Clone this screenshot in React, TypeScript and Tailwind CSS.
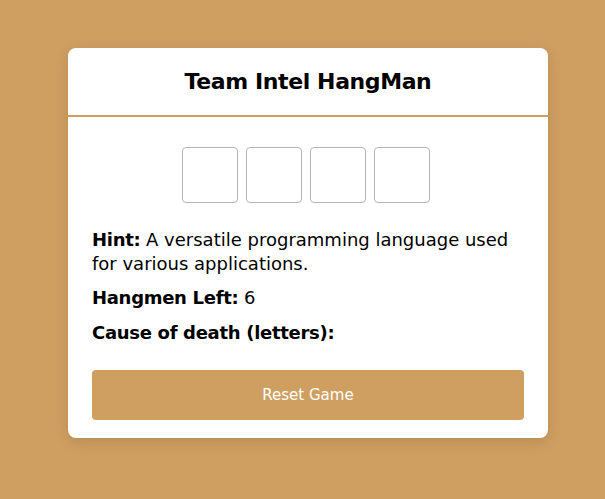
export default function App() {
  const slots = ['', '', '', '']

  return (
    <div className="min-h-screen w-full bg-[#cf9f61] pt-[48px] pl-[68px] font-['DejaVu_Sans',sans-serif]">
      <div className="w-[480px] rounded-lg bg-white shadow-[0_4px_14px_rgba(0,0,0,0.12)]">
        <div className="flex h-[69px] items-center justify-center border-b-2 border-[#cf9f61]">
          <h1 className="text-[22px] font-bold tracking-[-0.4px] text-black">Team Intel HangMan</h1>
        </div>
        <div className="px-6 pt-[30px] pb-[18px]">
          <div className="flex justify-center gap-2 pr-1">
            {slots.map((s, i) => (
              <div
                key={i}
                className="flex h-[56px] w-[56px] items-center justify-center rounded border border-[#b5b5b5] text-xl"
              >
                {s}
              </div>
            ))}
          </div>
          <div className="mt-[25px] text-[18px] leading-6 text-black">
            <p>
              <span className="font-bold tracking-[-0.3px]">Hint:</span> A versatile programming language used for various applications.
            </p>
            <p className="mt-[10px]">
              <span className="font-bold tracking-[-0.3px]">Hangmen Left:</span> 6
            </p>
            <p className="mt-[11px] font-bold tracking-[-0.3px]">Cause of death (letters):</p>
          </div>
          <button className="mt-[25px] h-[50px] w-full rounded bg-[#cf9f61] text-[15px] text-white">
            Reset Game
          </button>
        </div>
      </div>
    </div>
  )
}
